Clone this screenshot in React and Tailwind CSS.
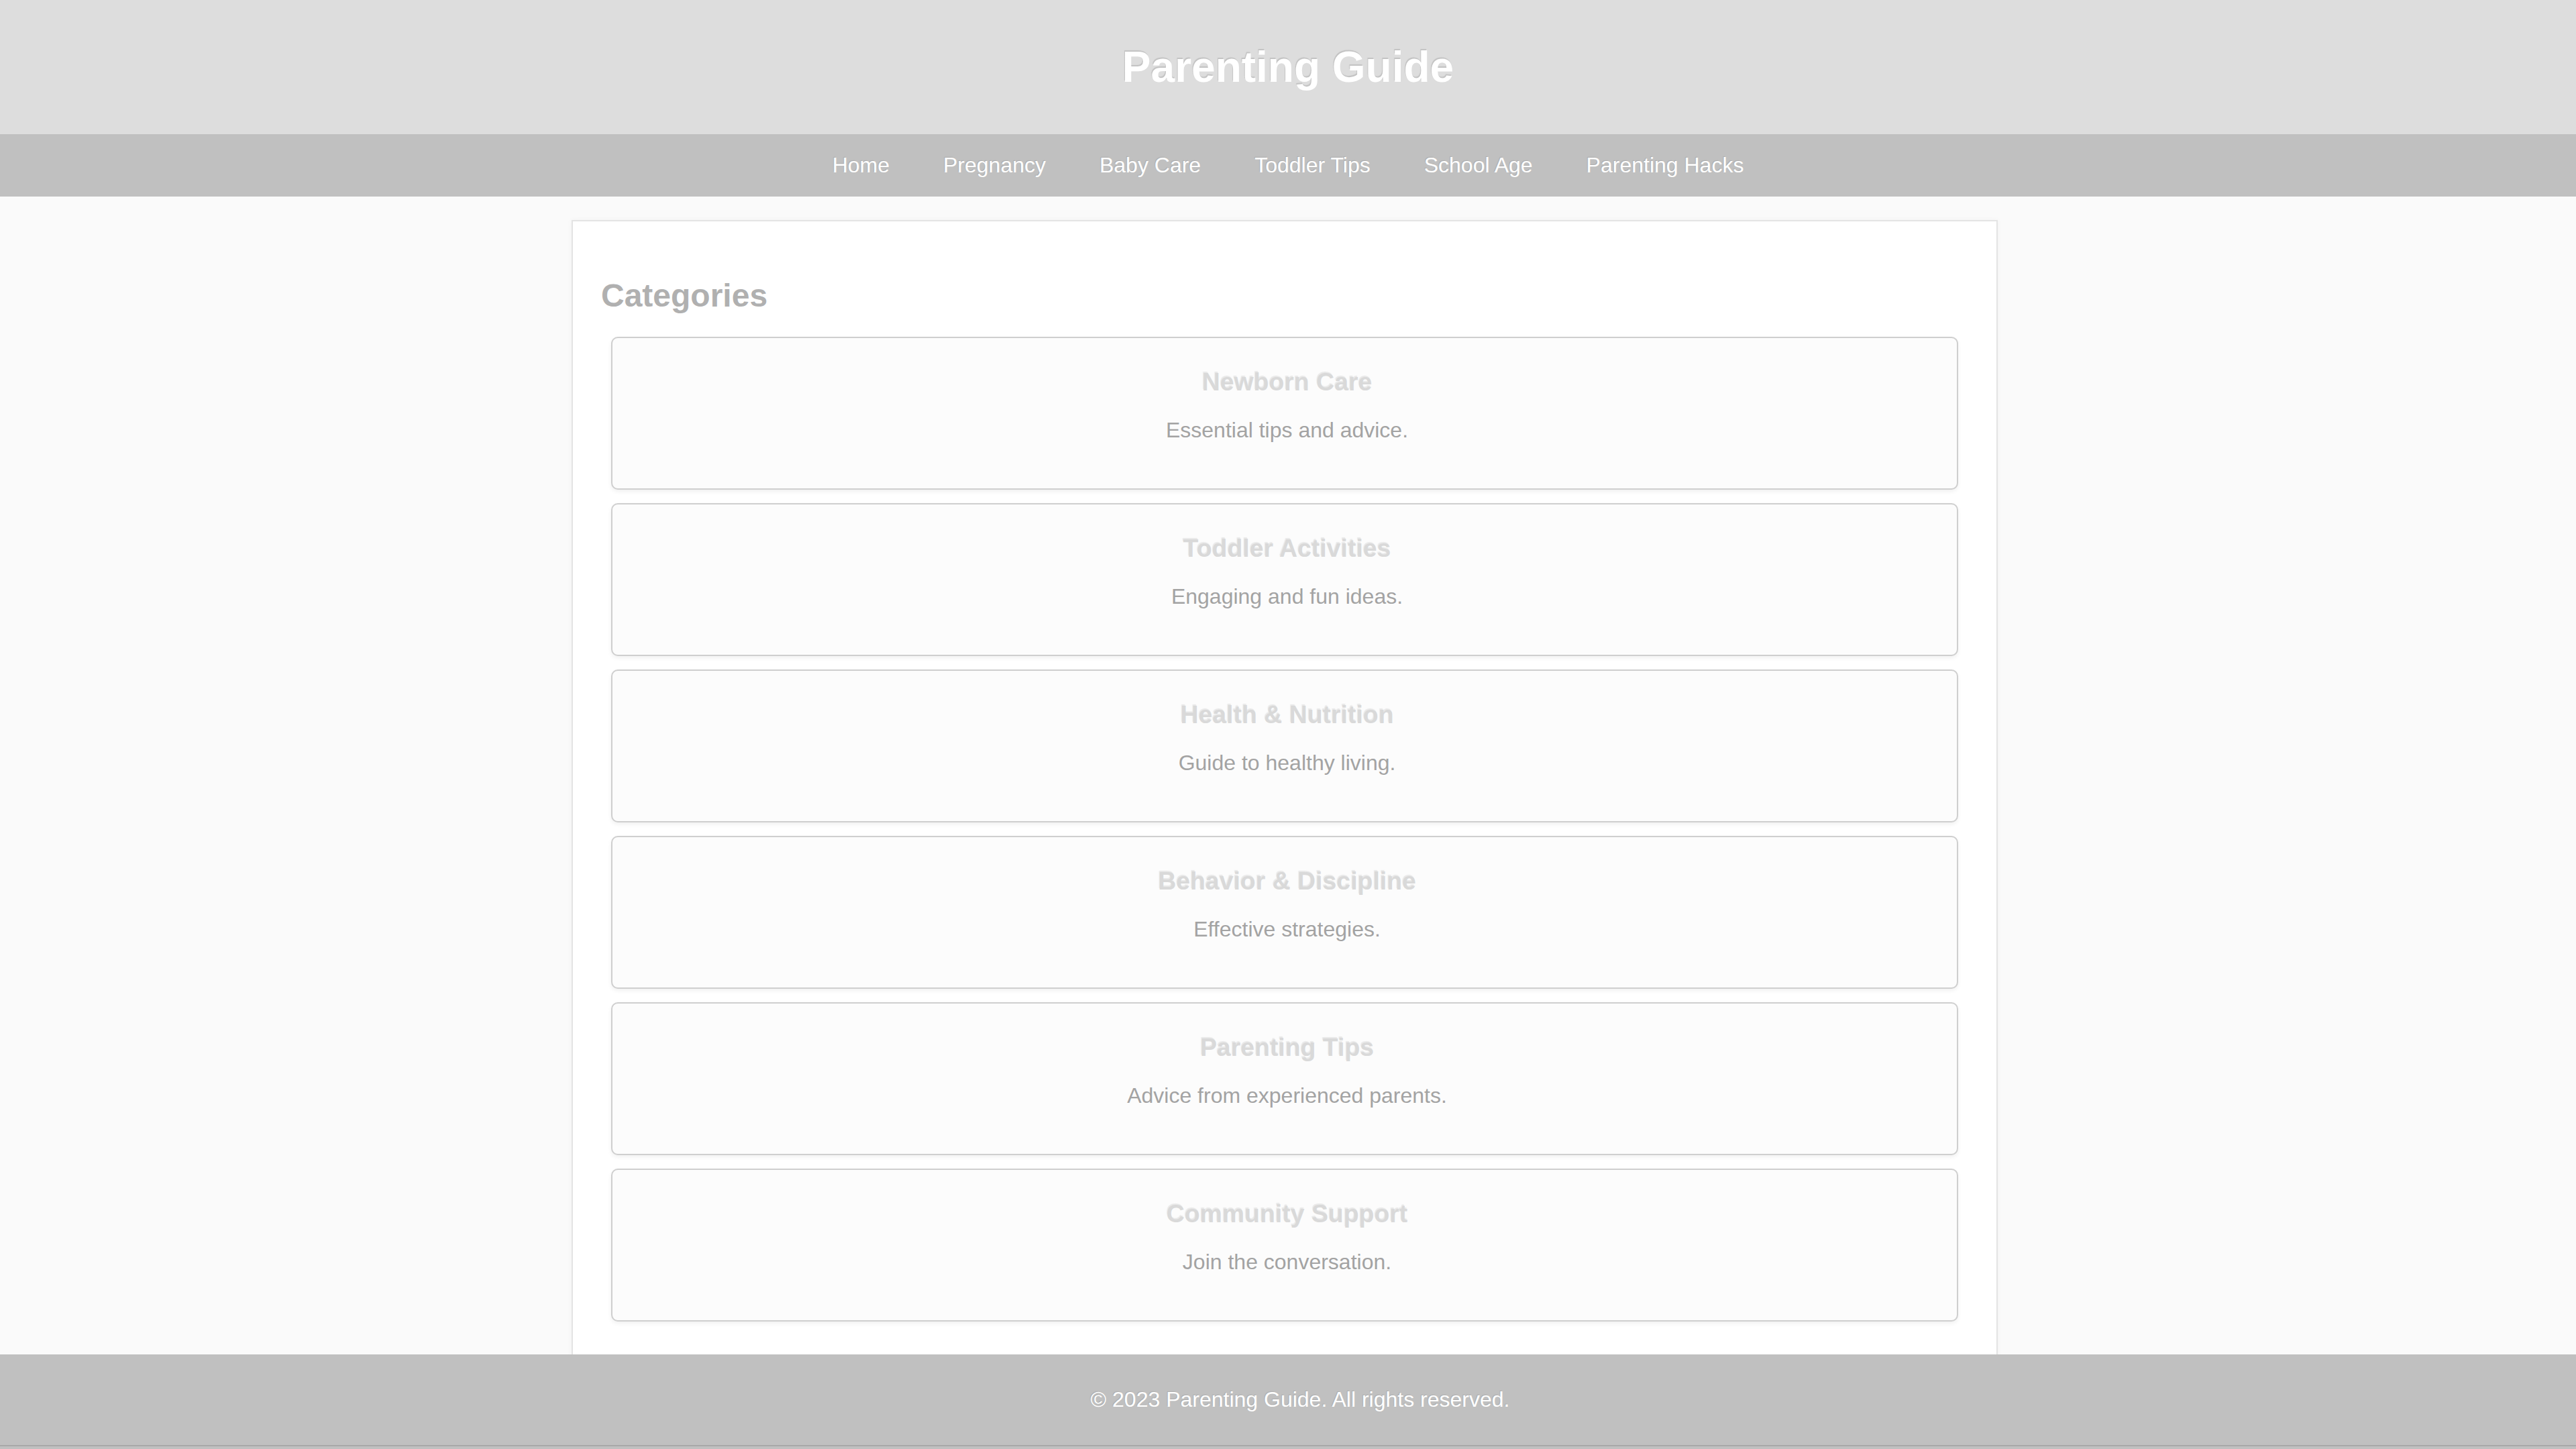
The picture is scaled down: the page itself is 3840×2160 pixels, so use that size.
const navLinks = ['Home', 'Pregnancy', 'Baby Care', 'Toddler Tips', 'School Age', 'Parenting Hacks'];

const categories = [
  { title: 'Newborn Care', text: 'Essential tips and advice.' },
  { title: 'Toddler Activities', text: 'Engaging and fun ideas.' },
  { title: 'Health & Nutrition', text: 'Guide to healthy living.' },
  { title: 'Behavior & Discipline', text: 'Effective strategies.' },
  { title: 'Parenting Tips', text: 'Advice from experienced parents.' },
  { title: 'Community Support', text: 'Join the conversation.' },
];

const CategoryCard = ({ title, text }) => (
  <div className="mx-[15px] flex h-[228px] flex-col items-center rounded-[10px] border-2 border-[#cfcfcf] bg-[#fcfcfc] pl-[7px] pt-[44px] shadow-[0_3px_6px_rgba(0,0,0,0.06)]">
    <h3 className="text-[37.44px] font-bold leading-[43px] text-[#d9d9d9] [text-shadow:-1px_-2px_1px_rgba(0,0,0,0.08)]">
      {title}
    </h3>
    <p className="mt-[32px] text-[32px] leading-[37px] text-[#a3a3a3]">{text}</p>
  </div>
);

export default function App() {
  return (
    <div className="min-h-screen bg-[#fafafa] font-['Liberation_Sans',Arial,sans-serif]">
      <header className="flex h-[200px] items-center justify-center bg-[#dddddd]">
        <h1 className="text-[64px] font-bold leading-[74px] text-white [text-shadow:-1px_-2px_1px_rgba(0,0,0,0.12)]">
          Parenting Guide
        </h1>
      </header>

      <nav className="flex h-[93px] items-center justify-center gap-[80px] bg-[#c0c0c0]">
        {navLinks.map((link) => (
          <a key={link} href="#" className="text-[32px] leading-[37px] text-white [text-shadow:-1px_-1px_1px_rgba(0,0,0,0.1)]">
            {link}
          </a>
        ))}
      </nav>

      <div className="flex justify-center pr-[10px] pt-[35px]">
        <main className="w-[2126px] border-2 border-[#e4e4e4] bg-white px-[42px] pb-[60px] pt-[40px] shadow-[0_0_8px_rgba(0,0,0,0.04)]">
          <h2 className="mt-[43px] text-[48px] font-bold leading-[55px] text-[#b0b0b0]">Categories</h2>
          <div className="mt-[34px] flex flex-col gap-[20px]">
            {categories.map((c) => (
              <CategoryCard key={c.title} title={c.title} text={c.text} />
            ))}
          </div>
        </main>
      </div>

      <footer className="fixed bottom-0 left-0 right-0 flex h-[141px] flex-col bg-[#c0c0c0]">
        <div className="flex h-[135px] items-center justify-center pl-[36px]">
          <p className="text-[32px] leading-[37px] text-white [text-shadow:-1px_-1px_1px_rgba(0,0,0,0.1)]">
            © 2023 Parenting Guide. All rights reserved.
          </p>
        </div>
        <div className="h-[2px] bg-[#a8a8a8]" />
      </footer>
    </div>
  );
}
